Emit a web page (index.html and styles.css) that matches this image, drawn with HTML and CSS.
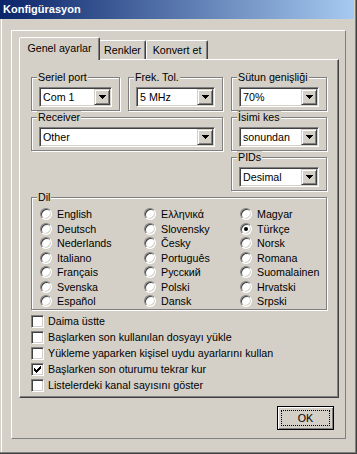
FILE: index.html
```html
<!DOCTYPE html>
<html lang="tr">
<head>
    <meta charset="UTF-8">
    <meta name="viewport" content="width=device-width, initial-scale=1.0">
    <title>Konfigürasyon</title>
    <link rel="stylesheet" href="styles.css">
</head>
<body>
    <div class="window">
        <div class="titlebar">Konfigürasyon</div>
        <div class="frame">
            <div class="tabs">
                <div class="tab tab-active tab-genel">Genel ayarlar</div>
                <div class="tab tab-renkler">Renkler</div>
                <div class="tab tab-konvert">Konvert et</div>
            </div>
            <div class="panel">
                <div class="settings">
                    <div class="group">
                        <div class="group-title">Seriel port</div>
                        <div class="combo"><span class="combo-text">Com 1</span><span class="combo-btn"><svg width="7" height="4" viewBox="0 0 7 4" shape-rendering="crispEdges"><path d="M0 0h7v1H0z M1 1h5v1H1z M2 2h3v1H2z M3 3h1v1H3z" fill="#000"/></svg></span></div>
                    </div>
                    <div class="group">
                        <div class="group-title">Frek. Tol.</div>
                        <div class="combo"><span class="combo-text">5 MHz</span><span class="combo-btn"><svg width="7" height="4" viewBox="0 0 7 4" shape-rendering="crispEdges"><path d="M0 0h7v1H0z M1 1h5v1H1z M2 2h3v1H2z M3 3h1v1H3z" fill="#000"/></svg></span></div>
                    </div>
                    <div class="group">
                        <div class="group-title">Sütun genişliği</div>
                        <div class="combo"><span class="combo-text">70%</span><span class="combo-btn"><svg width="7" height="4" viewBox="0 0 7 4" shape-rendering="crispEdges"><path d="M0 0h7v1H0z M1 1h5v1H1z M2 2h3v1H2z M3 3h1v1H3z" fill="#000"/></svg></span></div>
                    </div>
                    <div class="group group-wide">
                        <div class="group-title">Receiver</div>
                        <div class="combo"><span class="combo-text">Other</span><span class="combo-btn"><svg width="7" height="4" viewBox="0 0 7 4" shape-rendering="crispEdges"><path d="M0 0h7v1H0z M1 1h5v1H1z M2 2h3v1H2z M3 3h1v1H3z" fill="#000"/></svg></span></div>
                    </div>
                    <div class="group group-right">
                        <div class="group-title">İsimi kes</div>
                        <div class="combo"><span class="combo-text">sonundan</span><span class="combo-btn"><svg width="7" height="4" viewBox="0 0 7 4" shape-rendering="crispEdges"><path d="M0 0h7v1H0z M1 1h5v1H1z M2 2h3v1H2z M3 3h1v1H3z" fill="#000"/></svg></span></div>
                    </div>
                    <div class="group group-right">
                        <div class="group-title">PIDs</div>
                        <div class="combo"><span class="combo-text">Desimal</span><span class="combo-btn"><svg width="7" height="4" viewBox="0 0 7 4" shape-rendering="crispEdges"><path d="M0 0h7v1H0z M1 1h5v1H1z M2 2h3v1H2z M3 3h1v1H3z" fill="#000"/></svg></span></div>
                    </div>
                    <div class="group group-full group-dil">
                        <div class="group-title">Dil</div>
                        <div class="radios">
                            <div class="radio"><span class="radio-dot"></span>English</div>
                            <div class="radio"><span class="radio-dot"></span>Deutsch</div>
                            <div class="radio"><span class="radio-dot"></span>Nederlands</div>
                            <div class="radio"><span class="radio-dot"></span>Italiano</div>
                            <div class="radio"><span class="radio-dot"></span>Français</div>
                            <div class="radio"><span class="radio-dot"></span>Svenska</div>
                            <div class="radio"><span class="radio-dot"></span>Español</div>
                            <div class="radio"><span class="radio-dot"></span>Ελληνικά</div>
                            <div class="radio"><span class="radio-dot"></span>Slovensky</div>
                            <div class="radio"><span class="radio-dot"></span>Česky</div>
                            <div class="radio"><span class="radio-dot"></span>Português</div>
                            <div class="radio"><span class="radio-dot"></span>Русский</div>
                            <div class="radio"><span class="radio-dot"></span>Polski</div>
                            <div class="radio"><span class="radio-dot"></span>Dansk</div>
                            <div class="radio"><span class="radio-dot"></span>Magyar</div>
                            <div class="radio"><span class="radio-dot checked"><span class="radio-mark"></span></span>Türkçe</div>
                            <div class="radio"><span class="radio-dot"></span>Norsk</div>
                            <div class="radio"><span class="radio-dot"></span>Romana</div>
                            <div class="radio"><span class="radio-dot"></span>Suomalainen</div>
                            <div class="radio"><span class="radio-dot"></span>Hrvatski</div>
                            <div class="radio"><span class="radio-dot"></span>Srpski</div>
                        </div>
                    </div>
                </div>
                <div class="checks">
                    <div class="check"><span class="check-box"></span>Daima üstte</div>
                    <div class="check"><span class="check-box"></span>Başlarken son kullanılan dosyayı yükle</div>
                    <div class="check"><span class="check-box"></span>Yükleme yaparken kişisel uydu ayarlarını kullan</div>
                    <div class="check"><span class="check-box"><svg width="7" height="7" viewBox="0 0 7 7" shape-rendering="crispEdges"><path d="M0 2h1v3H0z M1 3h1v3H1z M2 4h1v3H2z M3 3h1v3H3z M4 2h1v3H4z M5 1h1v3H5z M6 0h1v3H6z" fill="#000"/></svg></span>Başlarken son oturumu tekrar kur</div>
                    <div class="check"><span class="check-box"></span>Listelerdeki kanal sayısını göster</div>
                </div>
            </div>
            <div class="actions">
                <div class="btn-ok"><span class="btn-focus">OK</span></div>
            </div>
        </div>
    </div>
</body>
</html>
```

FILE: styles.css
```css
body {
    margin: 0;
    padding: 0;
    font-family: "Liberation Sans", Arial, sans-serif;
    font-size: 10.7px;
    color: #000;
    background-color: #d4d0c8;
}
.window {
    width: 357px;
    height: 454px;
    box-sizing: border-box;
    background-color: #d4d0c8;
    box-shadow: inset -1px -1px #404040, inset -2px -2px #808080, inset 1px 0 #d4d0c8, inset 2px 0 #fff;
    overflow: hidden;
}
.titlebar {
    height: 19px;
    margin-right: 3px;
    padding-left: 3px;
    line-height: 19px;
    font-size: 11px;
    font-weight: bold;
    color: #fff;
    background: linear-gradient(to right, #0a246a, #a6caf0);
}
.frame {
    width: 335px;
    box-sizing: border-box;
    margin: 11px 0 0 11px;
    padding: 6px 6px 8px 7px;
    border: 1px solid;
    border-color: #fff #808080 #808080 #fff;
}
.tabs {
    display: flex;
    align-items: flex-end;
    height: 22px;
    padding-left: 2px;
}
.tab {
    height: 19px;
    box-sizing: border-box;
    padding-top: 3px;
    line-height: 13px;
    text-align: center;
    background-color: #d4d0c8;
    border: 1px solid;
    border-bottom: none;
    border-color: #fff #404040 transparent #fff;
    border-radius: 2px 2px 0 0;
    box-shadow: inset -1px 0 #808080;
}
.tab-genel {
    width: 78px;
}
.tab-renkler {
    width: 47px;
}
.tab-konvert {
    width: 62px;
}
.tab-active {
    width: 81px;
    height: 23px;
    padding-top: 4px;
    margin: 0 -1px -1px -2px;
    position: relative;
    z-index: 1;
}
.panel {
    padding: 17px 10px 4px 11px;
    border: 1px solid;
    border-color: #fff #404040 #404040 #fff;
    box-shadow: inset -1px -1px #808080;
}
.settings {
    display: grid;
    grid-template-columns: 89px 95px 96px;
    column-gap: 8px;
    row-gap: 6px;
}
.group {
    padding: 0 7px 3px;
    border: 1px solid #808080;
    box-shadow: inset 1px 1px #fff, 1px 1px #fff;
}
.group-wide {
    grid-column: 1 / span 2;
}
.group-right {
    grid-column: 3;
}
.group-full {
    grid-column: 1 / span 3;
}
.group-dil {
    padding-bottom: 1px;
}
.group-title {
    width: fit-content;
    margin: -7px 0 0 -2px;
    padding: 0 1px;
    line-height: 13px;
    background-color: #d4d0c8;
}
.combo {
    display: flex;
    height: 20px;
    box-sizing: border-box;
    margin-top: 3px;
    padding: 1px;
    background-color: #fff;
    border: 1px solid;
    border-color: #808080 #fff #fff #808080;
    box-shadow: inset 1px 1px #404040, inset -1px -1px #d4d0c8;
}
.combo-text {
    flex: 1;
    padding-left: 2px;
    line-height: 16px;
    white-space: nowrap;
}
.combo-btn {
    display: flex;
    align-items: center;
    justify-content: center;
    width: 16px;
    height: 16px;
    box-sizing: border-box;
    background-color: #d4d0c8;
    border: 1px solid;
    border-color: #d4d0c8 #404040 #404040 #d4d0c8;
    box-shadow: inset 1px 1px #fff, inset -1px -1px #808080;
}
.radios {
    display: grid;
    grid-template-columns: 104px 96px 1fr;
    grid-template-rows: 15px 15px 14px 15px 14px 15px 14px;
    grid-auto-flow: column;
    margin: 2px 0 0 1px;
}
.radio {
    display: flex;
    align-items: center;
    white-space: nowrap;
}
.radio-dot {
    display: flex;
    align-items: center;
    justify-content: center;
    width: 12px;
    height: 12px;
    box-sizing: border-box;
    margin-right: 5px;
    border-radius: 50%;
    background-color: #fff;
    border: 1px solid;
    border-color: #808080 #fff #fff #808080;
    box-shadow: inset 1px 1px #404040, inset -1px -1px #d4d0c8;
}
.radio-mark {
    width: 4px;
    height: 4px;
    border-radius: 50%;
    background-color: #000;
}
.checks {
    margin-top: 3px;
}
.check {
    display: flex;
    align-items: center;
    height: 16px;
    white-space: nowrap;
}
.check-box {
    display: flex;
    align-items: center;
    justify-content: center;
    width: 13px;
    height: 13px;
    box-sizing: border-box;
    margin-right: 4px;
    background-color: #fff;
    border: 1px solid;
    border-color: #808080 #fff #fff #808080;
    box-shadow: inset 1px 1px #404040, inset -1px -1px #d4d0c8;
}
.actions {
    display: flex;
    justify-content: flex-end;
    margin-top: 8px;
}
.btn-ok {
    display: flex;
    width: 57px;
    height: 24px;
    box-sizing: border-box;
    margin-right: 5px;
    padding: 3px;
    border: 1px solid #000;
    background-color: #d4d0c8;
    box-shadow: inset 1px 1px #fff, inset -1px -1px #808080;
}
.btn-focus {
    flex: 1;
    display: flex;
    align-items: center;
    justify-content: center;
    border: 1px dotted #000;
}
```
